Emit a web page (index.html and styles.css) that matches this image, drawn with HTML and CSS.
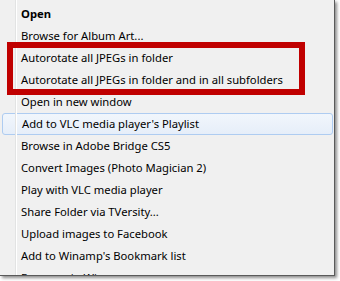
FILE: index.html
```html
<!DOCTYPE html>
<html>
<head>
<meta charset="utf-8">
<link rel="stylesheet" href="styles.css">
</head>
<body>
<div class="stage">
  <div class="menu">
    <div class="gutter"></div>
    <ul class="items">
      <li class="item bold">Open</li>
      <li class="item">Browse for Album Art...</li>
      <li class="item">Autorotate all JPEGs in folder</li>
      <li class="item">Autorotate all JPEGs in folder and in all subfolders</li>
      <li class="item">Open in new window</li>
      <li class="item hover">Add to VLC media player's Playlist</li>
      <li class="item">Browse in Adobe Bridge CS5</li>
      <li class="item">Convert Images (Photo Magician 2)</li>
      <li class="item">Play with VLC media player</li>
      <li class="item">Share Folder via TVersity...</li>
      <li class="item">Upload images to Facebook</li>
      <li class="item">Add to Winamp's Bookmark list</li>
      <li class="item">Enqueue in Winamp</li>
    </ul>
  </div>
  <div class="callout"></div>
</div>
</body>
</html>
```
FILE: styles.css
```css
html, body {
  margin: 0;
  padding: 0;
  background: #ffffff;
}
.stage {
  position: relative;
  width: 340px;
  height: 281px;
  overflow: hidden;
}
.menu {
  position: relative;
  width: 334px;
  height: 275px;
  background: #f0f0f0;
  border-right: 1px solid #5a5a5a;
  border-bottom: 1px solid #5a5a5a;
  box-shadow: 2px 2px 3px rgba(0,0,0,0.45);
  overflow: hidden;
  font-family: "Noto Sans", sans-serif;
  font-size: 11.25px;
  color: #000;
}
.gutter {
  position: absolute;
  left: 15px;
  top: 0;
  bottom: 0;
  width: 1px;
  background: #e2e3e3;
  border-right: 1px solid #ffffff;
}
.items {
  list-style: none;
  margin: 0;
  padding: 3px 0 0 0;
}
.item {
  height: 22px;
  line-height: 22px;
  padding-left: 21px;
  white-space: nowrap;
  box-sizing: border-box;
}
.bold {
  font-weight: bold;
}
.hover {
  margin: 0 1px 0 2px;
  padding-left: 19px;
  border: 1px solid #aeccf1;
  border-radius: 3px;
  line-height: 20px;
  background: linear-gradient(#f1f6fc, #e6eef9);
}
.callout {
  position: absolute;
  left: 7px;
  top: 42px;
  width: 298px;
  height: 53px;
  box-sizing: border-box;
  border: 6px solid #c00000;
}
```
